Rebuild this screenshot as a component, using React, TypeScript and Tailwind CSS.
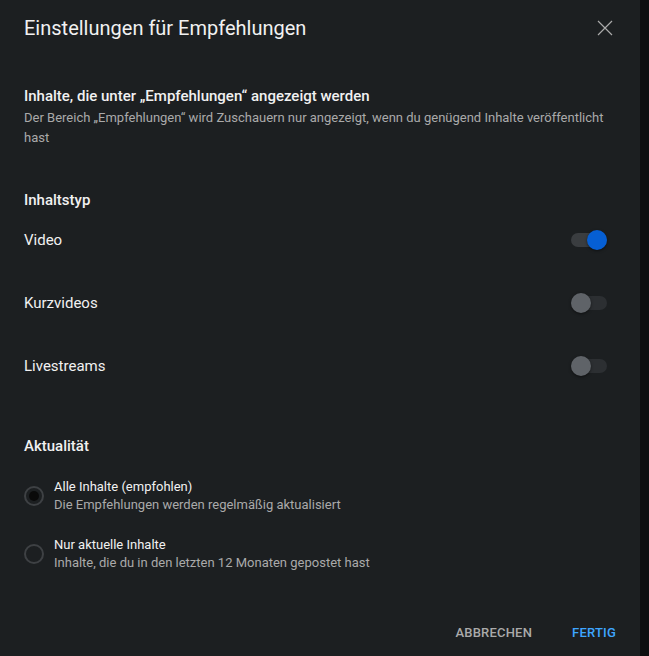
import { useState } from 'react';

function Toggle({ on, onChange }: { on: boolean; onChange: () => void }) {
  return (
    <button onClick={onChange} className="relative w-[36px] h-[14px] mr-[1px]">
      <span className={`absolute inset-0 rounded-full ${on ? 'bg-[#3a3d40]' : 'bg-[#2c2f32]'}`} />
      <span
        className={`absolute top-[-3px] w-[20px] h-[20px] rounded-full shadow-[0_1px_3px_rgba(0,0,0,0.5)] ${
          on ? 'left-[16px] bg-[#065fd4]' : 'left-0 bg-[#5f6368]'
        }`}
      />
    </button>
  );
}

function Radio({ checked }: { checked: boolean }) {
  return (
    <span className="w-[20px] h-[20px] rounded-full border-2 border-[#3e4144] flex items-center justify-center shrink-0">
      {checked && <span className="w-[10px] h-[10px] rounded-full bg-[#0a0a0a]" />}
    </span>
  );
}

export default function App() {
  const [types, setTypes] = useState({ video: true, shorts: false, live: false });
  const [recent, setRecent] = useState(false);

  const rows: { key: 'video' | 'shorts' | 'live'; label: string }[] = [
    { key: 'video', label: 'Video' },
    { key: 'shorts', label: 'Kurzvideos' },
    { key: 'live', label: 'Livestreams' },
  ];

  return (
    <div className="w-[649px] h-[656px] bg-[#0e0f10] flex" style={{ fontFamily: 'Roboto, "Liberation Sans", sans-serif' }}>
      <div className="w-[640px] h-full bg-[#1c1f21] flex flex-col">
        {/* header */}
        <div className="flex items-center justify-between pl-[24px] pr-[27px] pt-[13px] h-[42px]">
          <h1 className="text-[20px] text-[#f1f1f1] font-normal">Einstellungen für Empfehlungen</h1>
          <svg width="16" height="16" viewBox="0 0 16 16" className="text-[#aaaaaa]">
            <path d="M1 1 L15 15 M15 1 L1 15" stroke="currentColor" strokeWidth="1.2" />
          </svg>
        </div>

        <div className="px-[24px] pt-[44px]">
          <div className="text-[15px] font-medium text-[#f1f1f1] leading-[20px]">
            Inhalte, die unter „Empfehlungen“ angezeigt werden
          </div>
          <div className="text-[13px] text-[#aaaaaa] leading-[20px] mt-[2px]">
            Der Bereich „Empfehlungen“ wird Zuschauern nur angezeigt, wenn du genügend Inhalte veröffentlicht hast
          </div>

          <div className="text-[15px] font-medium text-[#f1f1f1] leading-[20px] mt-[42px]">Inhaltstyp</div>
          <div className="flex flex-col gap-[23px] mt-[10px] pr-[8px]">
            {rows.map((r) => (
              <div key={r.key} className="flex items-center justify-between h-[40px]">
                <span className="text-[15px] text-[#f1f1f1]">{r.label}</span>
                <Toggle on={types[r.key]} onChange={() => setTypes({ ...types, [r.key]: !types[r.key] })} />
              </div>
            ))}
          </div>

          <div className="text-[15px] font-medium text-[#f1f1f1] leading-[20px] mt-[50px]">Aktualität</div>
          <div className="flex flex-col gap-[22px] mt-[22px]">
            <button className="flex items-center gap-[10px] text-left" onClick={() => setRecent(false)}>
              <Radio checked={!recent} />
              <span className="flex flex-col">
                <span className="text-[13px] text-[#f1f1f1] leading-[18px]">Alle Inhalte (empfohlen)</span>
                <span className="text-[13px] text-[#aaaaaa] leading-[18px]">Die Empfehlungen werden regelmäßig aktualisiert</span>
              </span>
            </button>
            <button className="flex items-center gap-[10px] text-left" onClick={() => setRecent(true)}>
              <Radio checked={recent} />
              <span className="flex flex-col">
                <span className="text-[13px] text-[#f1f1f1] leading-[18px]">Nur aktuelle Inhalte</span>
                <span className="text-[13px] text-[#aaaaaa] leading-[18px]">Inhalte, die du in den letzten 12 Monaten gepostet hast</span>
              </span>
            </button>
          </div>
        </div>

        <div className="mt-auto flex justify-end items-center gap-[40px] pr-[24px] pb-[14px]">
          <button className="text-[13px] font-medium text-[#aaaaaa] tracking-[0.2px]">ABBRECHEN</button>
          <button className="text-[13px] font-medium text-[#3ea6ff] tracking-[0.2px]">FERTIG</button>
        </div>
      </div>
    </div>
  );
}
